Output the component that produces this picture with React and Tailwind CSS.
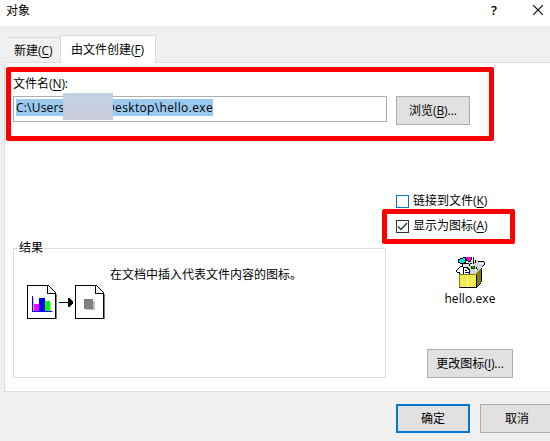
const cjk = "font-['Open_Sans','Noto_Sans_CJK_SC',sans-serif]";

function Key({ children }) {
  return (
    <span className="tracking-[-0.1px]">
      (<span className="underline decoration-1 underline-offset-2">{children}</span>)
    </span>
  );
}

function Button({ className, children }) {
  return (
    <button className={"flex shrink-0 items-center justify-center whitespace-nowrap bg-[#e1e1e1] " + className}>
      {children}
    </button>
  );
}

function Doc({ children }) {
  return (
    <svg width="30" height="35" viewBox="0 0 30 35" shapeRendering="crispEdges">
      <path d="M3 34h27V9h-1v24H3z" fill="#808080" />
      <path d="M0 0h21l8 8v26H0z" fill="#fff" />
      <path d="M0 0h21v1H1v32h27V9h-8V0h1v8h8v26H0z" fill="#000" />
      <path d="M21 0L29 8" fill="none" stroke="#000" strokeWidth="1" />
      {children}
    </svg>
  );
}

function ChartMarks() {
  return (
    <g>
      <path d="M6 13h1v13h19v1H6zM18 15h1v11h-1zM23 18h1v8h-1z" fill="#c0c0c0" />
      <path d="M7 19h5v7H7z" fill="#f0f" />
      <path d="M12 13h6v13h-6z" fill="#00f" />
      <path d="M18 16h5v10h-5z" fill="#0f0" />
      <path d="M5 11h1v15h19v1H5z" fill="#00f" />
    </g>
  );
}

function PackageIcon() {
  return (
    <svg width="32" height="32" viewBox="0 0 32 32" shapeRendering="crispEdges">
      <defs>
        <pattern id="dither" width="2" height="2" patternUnits="userSpaceOnUse">
          <path d="M0 0h2v2H0z" fill="#fff700" />
          <path d="M0 0h1v1H0zM1 1h1v1H1z" fill="#e2dfa0" />
        </pattern>
      </defs>
      <path d="M14 6h5l2-2h2l1 1h6v3l-3 4-4 6H14z" fill="#d4d4d4" />
      <path d="M24 5h6v1h-6zM30 6h1v3h-1zM29 9h1v1h-1zM28 10h1v1h-1zM16 7h2v1h-2zM15 8h1v2h-1zM22 11h1v2h-1zM23 13h1v1h-1z" fill="#000" />
      <path d="M17 8h2v2h-2zM25 7h4v1h-4zM21 13h2v2h-2z" fill="#fff" />
      <path d="M19 1h1v7h-1zM21 4h1v3h-1z" fill="#000" />
      <path d="M4 3h2V2h3V1h3v6h-1v1H6V7H4z" fill="#000" />
      <path d="M5 4h1V3h3V2h2v4h-1v1H6V6H5z" fill="#00e0e0" />
      <path d="M11 1h7v3h-1v2h-3V5h-2V3h-1z" fill="#000" />
      <path d="M12 1h5v3h-1v1h-2V4h-1V3h-1z" fill="#f000f0" />
      <path d="M5 11h1v-1h3v1H6v1H5v1H4v1H3v2h3v2h1v1H5v-2H3v-1H2v-2h1v-1h1v-1h1z" fill="#000" />
      <path d="M9 7h6v1H9zM8 8h1v3H8zM9 11h5v1h1v1h1v5H9z" fill="#000" />
      <path d="M9 8h5v3H9z" fill="#e0e0e0" />
      <path d="M10 12h3v1h1v1h1v4h-5z" fill="#fff" />
      <path d="M11 14h2v1h-2zM11 16h4v1h-4z" fill="#000090" />
      <path d="M17 10h4v3h-4z" fill="#005000" />
      <path d="M18 10h2v2h-2z" fill="#00a000" />
      <path d="M5 18h18v14H5z" fill="#808000" />
      <path d="M6 19h16v12H6z" fill="url(#dither)" />
      <path d="M22 18l6-7v14l-6 7z" fill="#808000" />
      <path d="M6 31h17v1H6zM22 19h1v13h-1zM27 12h1v14h-1zM23 30h1v1h-1zM24 29h1v1h-1zM25 28h1v1h-1zM26 27h1v1h-1z" fill="#000" />
      <path d="M13 19h1v12h-1z" fill="#ffffb0" />
    </svg>
  );
}

export default function App() {
  return (
    <div className={"relative flex h-[441px] w-[550px] flex-col overflow-hidden bg-[#f0f0f0] text-[12px] leading-4 text-black " + cjk}>
      <header className="flex h-[26px] shrink-0 items-center bg-white pl-1.5">
        <span className="-mt-1">对象</span>
        <span className="-mt-1.5 ml-auto font-['Open_Sans'] text-[13px] font-semibold">?</span>
        <svg className="-mt-1.5 ml-9 mr-[7px]" width="10" height="10" viewBox="0 0 10 10">
          <path d="M0 0L10 10M10 0L0 10" stroke="#000" strokeWidth="1.100" />
        </svg>
      </header>

      <nav className="flex h-[37px] shrink-0 items-end pl-1.5">
        <div className="mb-px flex h-[25px] w-[54px] items-center border-t border-[#d9d9d9] pl-2 pt-0.5">
          新建<Key>C</Key>
        </div>
        <div className="z-10 flex h-7 w-24 items-center border border-b-0 border-[#d9d9d9] bg-white pl-2.5">
          由文件创建<Key>F</Key>
        </div>
      </nav>

      <main className="-mt-px ml-1 flex h-[330px] shrink-0 flex-col border-y border-l border-[#dcdcdc] bg-white pl-2">
        <label className="mt-[13px]">
          文件名<Key>N</Key>:
        </label>
        <div className="mt-1 flex items-start gap-[9px]">
          <div className="flex h-[26px] w-[374px] items-start border border-[#abadb3] pl-0.5 pt-0.5">
            <div className="relative flex h-[17px] w-[197px] items-center justify-between bg-[#99c9ef]">
              <span className="pt-px tracking-[0.200px]">C:\Users</span>
              <span className="pt-px tracking-[0.350px]">Desktop\hello.exe</span>
              <div className="absolute -top-1.5 left-[47px] h-[27px] w-[50px] bg-linear-to-b from-[#bfd3e4] to-[#cccbdc]" />
            </div>
          </div>
          <Button className="h-[29px] w-[74px] border border-[#adadad]">浏览<Key>B</Key>...</Button>
        </div>

        <div className="mt-[68px] flex flex-col gap-[9px] pl-[383px]">
          <div className="flex h-4 items-center gap-1">
            <span className="size-[13px] border border-[#0078d7]" />
            <span>链接到文件<Key>K</Key></span>
          </div>
          <div className="flex h-4 items-center gap-1">
            <span className="size-[13px] border border-[#333]">
              <svg width="11" height="11" viewBox="0 0 11 11">
                <path d="M1 5.500L4 8.500L10 2" fill="none" stroke="#333" strokeWidth="1.300" />
              </svg>
            </span>
            <span>显示为图标<Key>A</Key></span>
          </div>
        </div>

        <div className="mt-[6px] flex items-start">
          <fieldset className="h-[138px] w-[373px] border border-[#dcdcdc] pl-[13px]">
            <legend className="-ml-[9px] px-px">结果</legend>
            <div className="flex">
              <div className="mt-[29px] flex items-center">
                <Doc><ChartMarks /></Doc>
                <svg className="ml-0.5 mr-0.5" width="14" height="11" viewBox="0 0 14 11" shapeRendering="crispEdges">
                  <path d="M0 5h9V1h1l4 4v1l-4 4H9V6H0z" />
                </svg>
                <Doc>
                  <path d="M11 16h9v9h-9z" fill="#c0c0c0" />
                  <path d="M9 14h9v10H9z" fill="#808080" />
                </Doc>
              </div>
              <p className="ml-[5px] mt-[11px] whitespace-nowrap">在文档中插入代表文件内容的图标。</p>
            </div>
          </fieldset>
          <div className="ml-[41px] mt-4 flex w-[86px] flex-col items-center">
            <PackageIcon />
            <span className="mt-[3px] tracking-[0.100px]">hello.exe</span>
            <Button className="mt-[42px] h-[29px] w-[86px] border border-[#adadad] pt-px">更改图标<Key>I</Key>...</Button>
          </div>
        </div>
      </main>

      <footer className="mt-3 flex shrink-0 gap-2.5 pl-[396px]">
        <Button className="h-[29px] w-[74px] border-2 border-[#0078d7]">确定</Button>
        <Button className="h-[29px] w-[74px] border border-[#adadad]">取消</Button>
      </footer>

      <div className="absolute left-1.5 top-[67px] z-20 h-[74px] w-[488px] rounded-[2px] border-5 border-[#fe0000]" />
      <div className="absolute left-[382px] top-[209px] z-20 h-[35px] w-[133px] rounded-[2px] border-5 border-[#fe0000]" />
    </div>
  );
}
